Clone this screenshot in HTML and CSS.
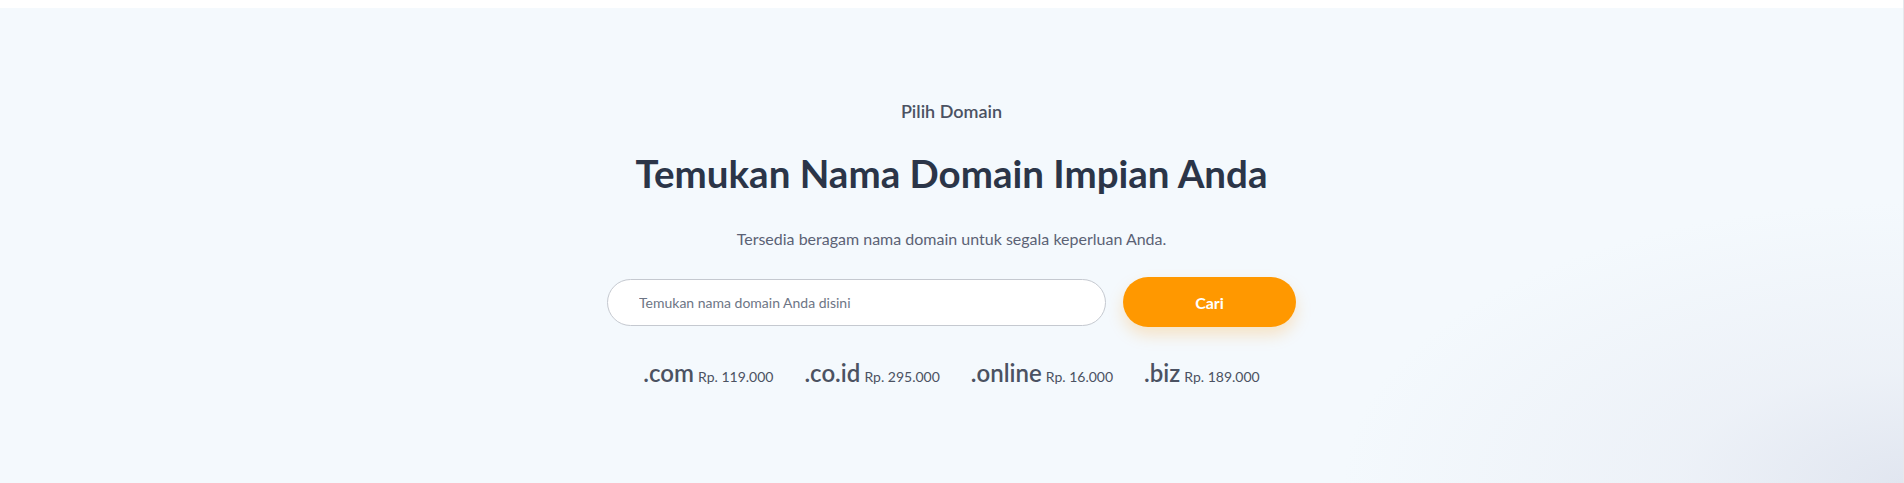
FILE: index.html
```html
<!DOCTYPE html>
<html lang="id">
<head>
<meta charset="utf-8">
<title>Pilih Domain</title>
<link rel="stylesheet" href="styles.css">
</head>
<body>
<div class="page">
  <section class="domain-hero">
    <p class="eyebrow">Pilih Domain</p>
    <h1 class="title">Temukan Nama Domain Impian Anda</h1>
    <p class="subtitle">Tersedia beragam nama domain untuk segala keperluan Anda.</p>
    <form class="search" onsubmit="return false">
      <input class="search-input" type="text" placeholder="Temukan nama domain Anda disini">
      <button class="search-btn" type="submit">Cari</button>
    </form>
    <ul class="tlds">
      <li class="tld"><span class="tld-name">.com</span> <span class="tld-price">Rp. 119.000</span></li>
      <li class="tld"><span class="tld-name">.co.id</span> <span class="tld-price">Rp. 295.000</span></li>
      <li class="tld"><span class="tld-name">.online</span> <span class="tld-price">Rp. 16.000</span></li>
      <li class="tld"><span class="tld-name">.biz</span> <span class="tld-price">Rp. 189.000</span></li>
    </ul>
  </section>
</div>
</body>
</html>
```

FILE: styles.css
```css
html, body {
  margin: 0;
  padding: 0;
  background: #ffffff;
}

body {
  font-family: "Lato", "Noto Sans", "Liberation Sans", sans-serif;
  color: #4b5262;
}

.page {
  padding-top: 8px;
  border-right: 1px solid #e6e8ec;
  height: 475px;
}

.domain-hero {
  height: 475px;
  box-sizing: border-box;
  padding-top: 90px;
  display: flex;
  flex-direction: column;
  align-items: center;
  background:
    radial-gradient(ellipse 560px 280px at 100% 100%, rgba(225, 230, 240, 1) 0%, rgba(232, 236, 244, 0.6) 40%, rgba(244, 249, 253, 0) 100%),
    #f4f9fd;
}

.eyebrow {
  margin: 0;
  font-size: 18px;
  line-height: 26px;
  font-weight: 600;
  color: #4b5262;
}

.title {
  margin: 25px 0 0;
  font-size: 38.5px;
  line-height: 48px;
  font-weight: 700;
  color: #2b3548;
}

.subtitle {
  margin: 30px 0 0;
  font-size: 16px;
  line-height: 24px;
  font-weight: 400;
  color: #5b6275;
}

.search {
  margin: 26px 0 0;
  display: flex;
  align-items: center;
  gap: 17px;
}

.search-input {
  box-sizing: border-box;
  width: 499px;
  height: 47px;
  padding: 0 20px 0 31px;
  border: 1px solid #c5c9d0;
  border-radius: 24px;
  background: #ffffff;
  font-family: inherit;
  font-size: 14px;
  color: #4b5262;
  outline: none;
}

.search-input::placeholder {
  color: #6d7585;
  opacity: 1;
}

.search-btn {
  width: 173px;
  height: 50px;
  border: none;
  border-radius: 25px;
  background: #ff9800;
  color: #ffffff;
  font-family: inherit;
  font-size: 16px;
  font-weight: 700;
  box-shadow: 0 8px 16px rgba(255, 152, 0, 0.22);
  cursor: pointer;
}

.tlds {
  list-style: none;
  margin: 32px 0 0;
  padding: 0;
  display: flex;
  gap: 31px;
}

.tld {
  line-height: 28px;
  white-space: nowrap;
}

.tld-name {
  font-size: 24px;
  font-weight: 600;
  color: #4b5262;
}

.tld-price {
  font-size: 14px;
  font-weight: 400;
  color: #4b5262;
}
```
